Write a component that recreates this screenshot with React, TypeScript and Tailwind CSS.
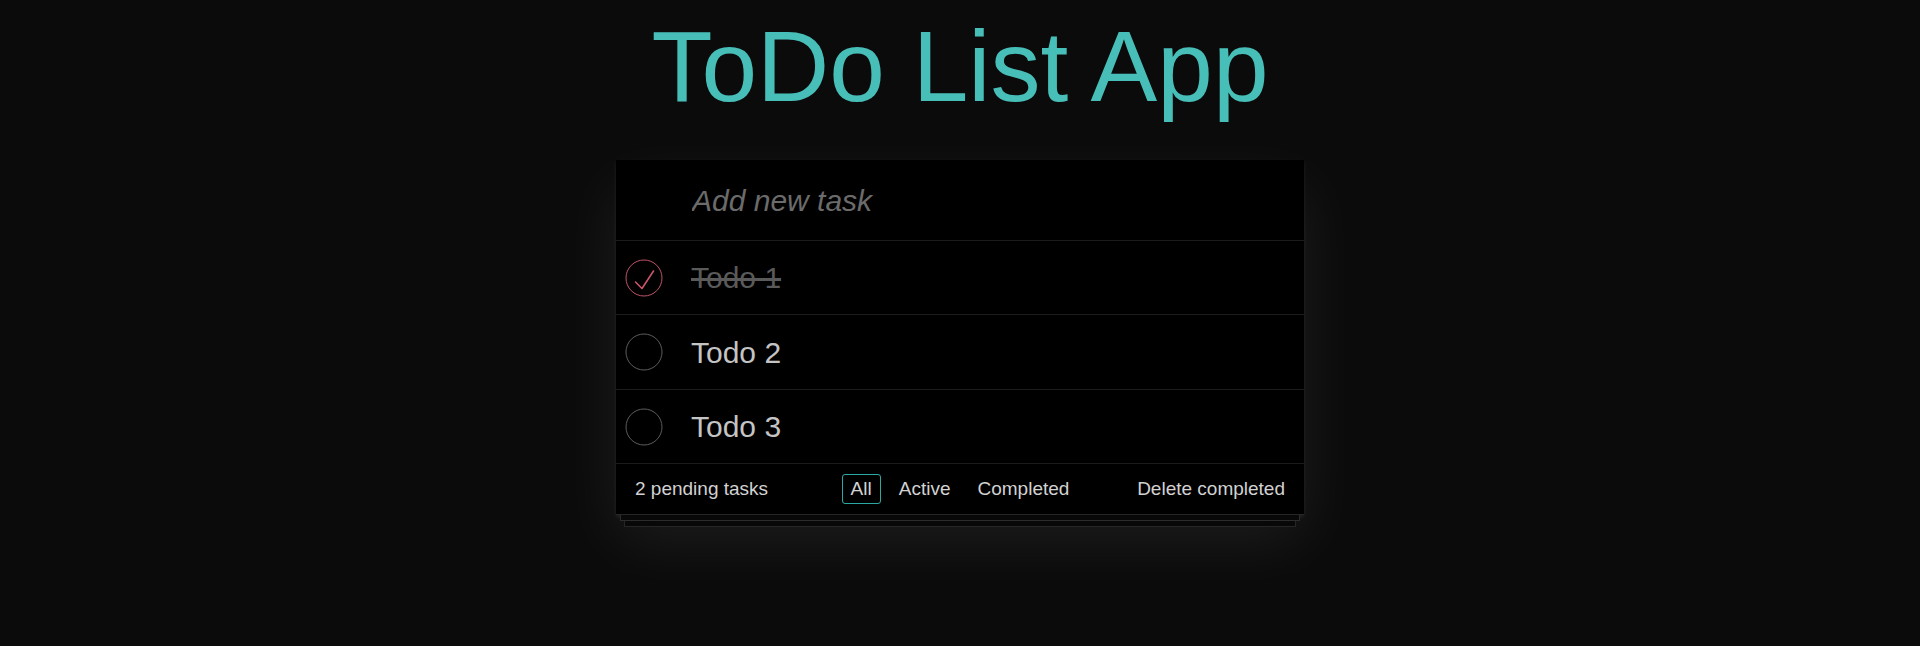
import { useState } from 'react';

type Todo = { id: number; title: string; done: boolean };

const initialTodos: Todo[] = [
  { id: 1, title: 'Todo 1', done: true },
  { id: 2, title: 'Todo 2', done: false },
  { id: 3, title: 'Todo 3', done: false },
];

function Toggle({ done }: { done: boolean }) {
  return (
    <svg width="38" height="38" viewBox="0 0 38 38" className="shrink-0">
      <circle cx="19" cy="19" r="18" fill="none" stroke={done ? '#bf5467' : '#5c5c5c'} strokeWidth="1" />
      {done && (
        <path d="M10.5 23 L17 29.5 L28.5 12" fill="none" stroke="#c9566a" strokeWidth="1.6" strokeLinecap="round" strokeLinejoin="round" />
      )}
    </svg>
  );
}

export default function App() {
  const [todos] = useState(initialTodos);
  const pending = todos.filter((t) => !t.done).length;
  const rowHeights = ['h-[74px]', 'h-[75px]', 'h-[74px]'];

  return (
    <div className="min-h-screen bg-[#0b0b0b] font-['Liberation_Sans',Arial,sans-serif]">
      <div className="flex flex-col items-center pt-[16px]">
        <h1 className="text-[100px] leading-none font-normal text-[#47bfb8] mb-[44px]">ToDo List App</h1>

        <div className="w-[688px]">
          <div className="bg-black shadow-[0_2px_4px_0_rgba(255,255,255,0.08),0_25px_60px_0_rgba(255,255,255,0.08)]">
            <div className="h-[81px] border-b border-[#1b1b1b] flex items-center pl-[76px] pr-4">
              <input
                placeholder="Add new task"
                className="w-full bg-transparent outline-none text-[30px] italic text-[#c4c4c4] placeholder:text-[#6b6b6b]"
              />
            </div>

            {todos.map((todo, i) => (
              <div key={todo.id} className={`${rowHeights[i]} border-b border-[#1b1b1b] flex items-center pl-[9px] gap-[28px]`}>
                <Toggle done={todo.done} />
                <span className={todo.done ? 'text-[30px] text-[#5a5a5a] line-through' : 'text-[30px] text-[#c4c4c4]'}>
                  {todo.title}
                </span>
              </div>
            ))}

            <div className="h-[51px] grid grid-cols-[1fr_auto_1fr] items-center px-[19px] text-[19px] text-[#d2d2d2] border-b border-[#262626]">
              <span>{pending} pending tasks</span>
              <div className="flex gap-[9px]">
                <button className="h-[30px] px-[8px] border border-[#2aa9a4] rounded-[3px]">All</button>
                <button className="h-[30px] px-[8px] border border-transparent rounded-[3px]">Active</button>
                <button className="h-[30px] px-[8px] border border-transparent rounded-[3px]">Completed</button>
              </div>
              <span className="text-right">Delete completed</span>
            </div>
          </div>
          <div className="mx-[4px] h-[6px] bg-[#080808] border-x border-b border-[#2c2c2c]" />
          <div className="mx-[8px] h-[6px] bg-[#080808] border-x border-b border-[#262626]" />
        </div>
      </div>
    </div>
  );
}
